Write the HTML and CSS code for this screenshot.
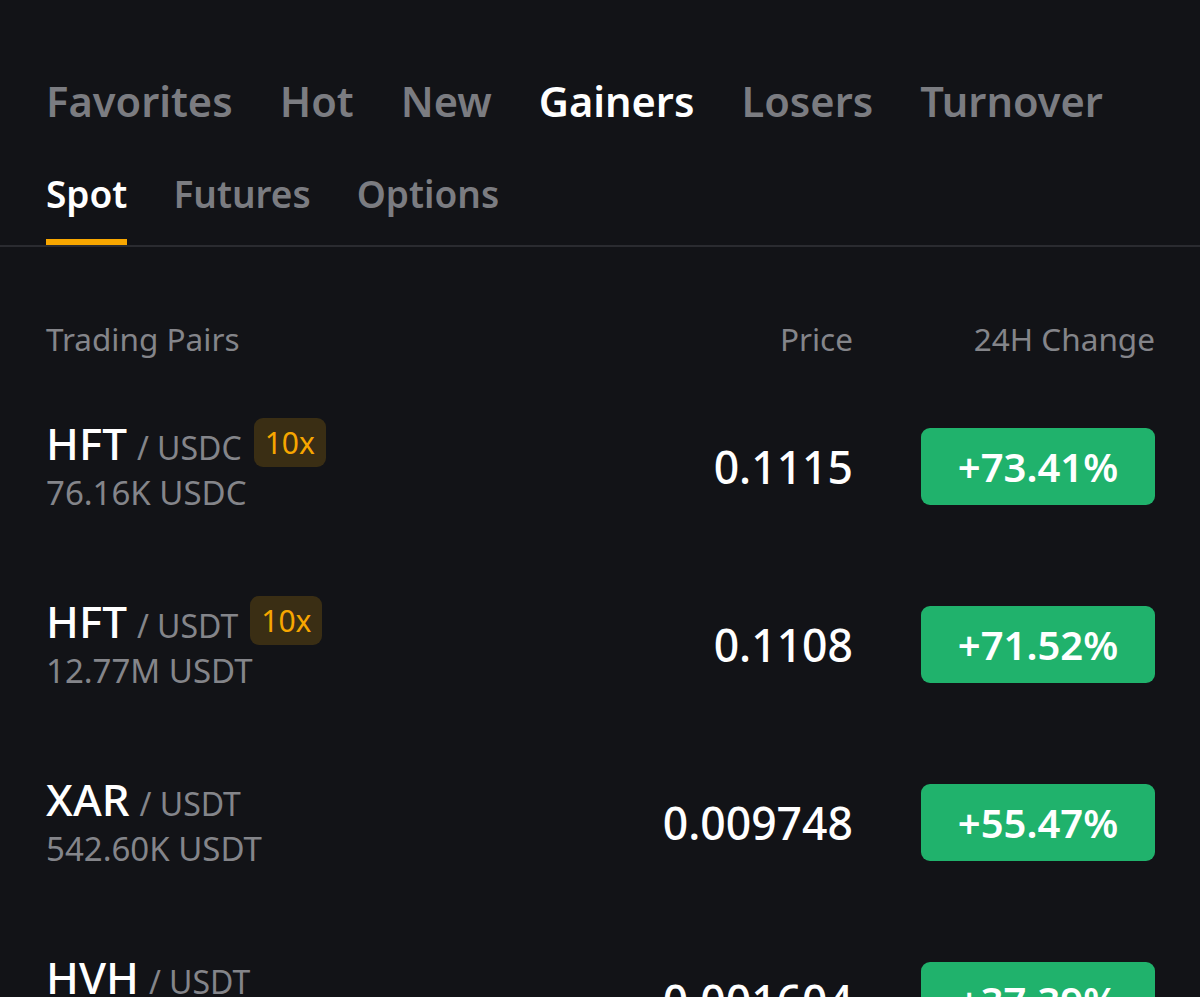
FILE: index.html
```html
<!DOCTYPE html>
<html lang="en">
<head>
<meta charset="utf-8">
<title>Market - Gainers</title>
<link rel="stylesheet" href="styles.css">
</head>
<body>
<div class="page">
  <nav class="top-tabs">
    <span class="top-tab">Favorites</span>
    <span class="top-tab">Hot</span>
    <span class="top-tab">New</span>
    <span class="top-tab active">Gainers</span>
    <span class="top-tab">Losers</span>
    <span class="top-tab">Turnover</span>
  </nav>
  <nav class="sub-tabs">
    <span class="sub-tab active">Spot</span>
    <span class="sub-tab">Futures</span>
    <span class="sub-tab">Options</span>
  </nav>
  <div class="table">
    <div class="thead">
      <span class="col-pair">Trading Pairs</span>
      <span class="col-price">Price</span>
      <span class="col-change">24H Change</span>
    </div>
    <div class="row">
      <div class="col-pair">
        <div class="pair-line"><span class="base">HFT</span><span class="quote">/ USDC</span><span class="lev">10x</span></div>
        <div class="vol">76.16K USDC</div>
      </div>
      <div class="col-price price">0.1115</div>
      <div class="col-change"><span class="pill">+73.41%</span></div>
    </div>
    <div class="row">
      <div class="col-pair">
        <div class="pair-line"><span class="base">HFT</span><span class="quote">/ USDT</span><span class="lev">10x</span></div>
        <div class="vol">12.77M USDT</div>
      </div>
      <div class="col-price price">0.1108</div>
      <div class="col-change"><span class="pill">+71.52%</span></div>
    </div>
    <div class="row">
      <div class="col-pair">
        <div class="pair-line"><span class="base">XAR</span><span class="quote">/ USDT</span></div>
        <div class="vol">542.60K USDT</div>
      </div>
      <div class="col-price price">0.009748</div>
      <div class="col-change"><span class="pill">+55.47%</span></div>
    </div>
    <div class="row">
      <div class="col-pair">
        <div class="pair-line"><span class="base">HVH</span><span class="quote">/ USDT</span></div>
        <div class="vol">341.32K USDT</div>
      </div>
      <div class="col-price price">0.001604</div>
      <div class="col-change"><span class="pill">+37.39%</span></div>
    </div>
  </div>
</div>
</body>
</html>
```
FILE: styles.css
```css
html, body {
  margin: 0;
  padding: 0;
  background: #121317;
}
body {
  font-family: "Noto Sans", "Open Sans", sans-serif;
  color: #ffffff;
  overflow: hidden;
  height: 997px;
}
.page {
  padding-top: 71px;
}
.top-tabs {
  display: flex;
  gap: 47px;
  padding: 0 46px;
  font-size: 41.6px;
  font-weight: 600;
  line-height: 60px;
  color: #7b7c81;
}
.top-tab.active {
  color: #ffffff;
}
.sub-tabs {
  display: flex;
  gap: 46px;
  padding: 35px 46px 0;
  border-bottom: 2px solid #2a2b30;
}
.sub-tab {
  font-size: 37px;
  font-weight: 600;
  line-height: 56px;
  padding-bottom: 17px;
  border-bottom: 6px solid transparent;
  color: #7b7c81;
}
.sub-tab.active {
  color: #ffffff;
  border-bottom-color: #f7a600;
}
.table {
  padding: 0 45px 0 46px;
}
.thead {
  display: flex;
  align-items: center;
  padding: 70px 0 16px;
  line-height: 44px;
  font-size: 31.5px;
  color: #84858a;
}
.col-pair {
  flex: 1;
}
.col-price {
  width: 260px;
  text-align: right;
}
.col-change {
  width: 302px;
  display: flex;
  justify-content: flex-end;
}
.row {
  display: flex;
  align-items: center;
  height: 178px;
}
.pair-line {
  display: flex;
  align-items: baseline;
  height: 50px;
}
.base {
  font-size: 44px;
  font-weight: 500;
  line-height: 50px;
  color: #ffffff;
}
.quote {
  font-size: 32px;
  color: #84858a;
  margin-left: 10px;
}
.lev {
  align-self: center;
  margin-left: 12px;
  font-size: 30px;
  line-height: 49px;
  padding: 0 11px;
  border-radius: 9px;
  background: #3a2e14;
  color: #f7a600;
}
.vol {
  font-size: 33px;
  line-height: 44px;
  padding-top: 3px;
  color: #84858a;
}
.price {
  font-size: 44.5px;
  font-weight: 500;
  color: #ffffff;
}
.pill {
  display: flex;
  align-items: center;
  justify-content: center;
  width: 234px;
  height: 77px;
  border-radius: 9px;
  background: #20b26c;
  font-size: 40px;
  font-weight: 600;
  color: #ffffff;
}
```
